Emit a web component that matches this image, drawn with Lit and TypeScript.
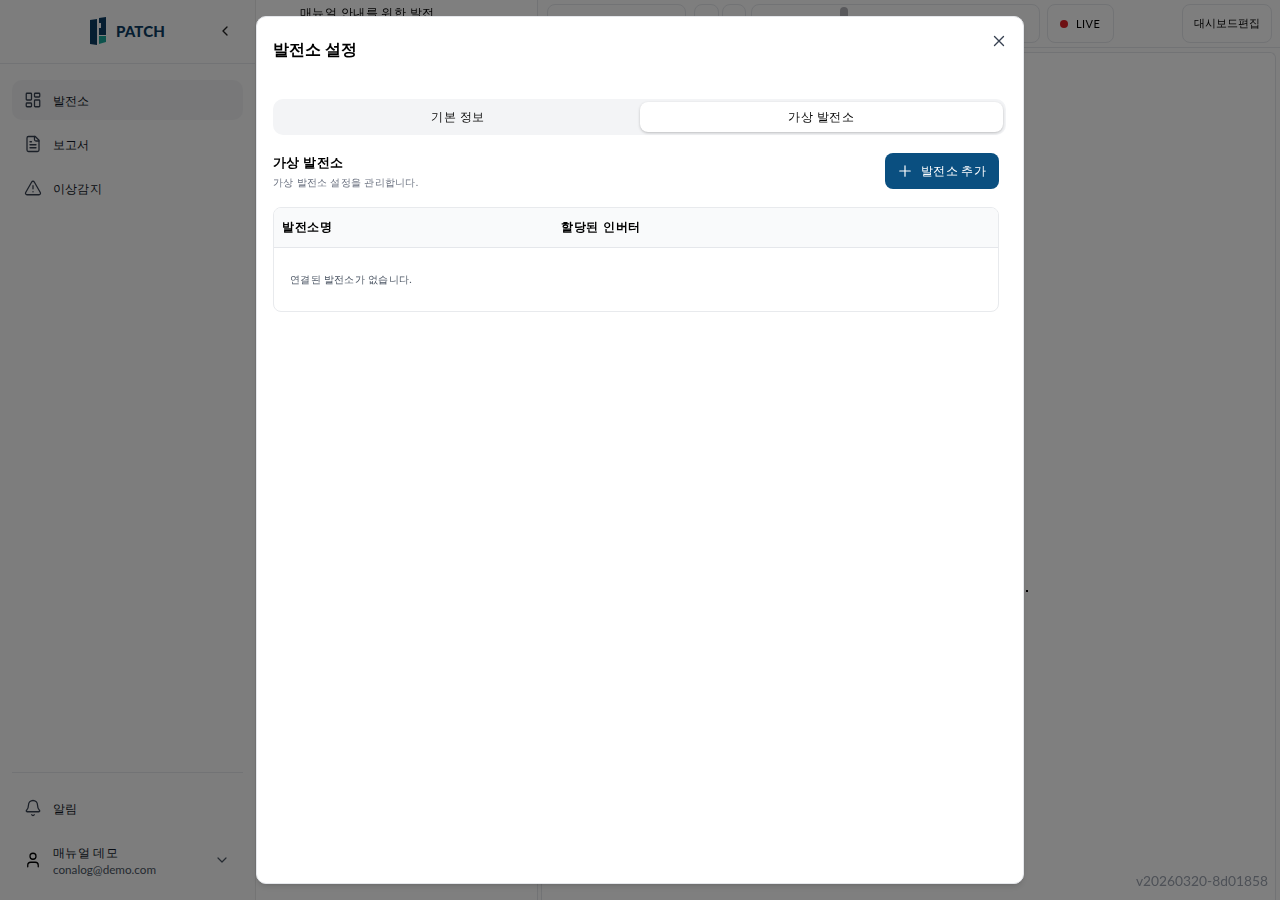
import { LitElement, html, css, svg } from "lit";
import { customElement } from "lit/decorators.js";

const ic = (body: unknown, size = 18, sw = 1.7) => html`<svg width=${size} height=${size} viewBox="0 0 24 24" fill="none" stroke="currentColor" stroke-width=${sw} stroke-linecap="round" stroke-linejoin="round">${body}</svg>`;

@customElement("app-root")
export class AppRoot extends LitElement {
  static styles = css`
    :host { display: block; width: 1280px; height: 900px; overflow: hidden; position: relative; background: #fff; font-family: Lato, sans-serif; color: #000; }
    * { box-sizing: border-box; }
    .app { display: flex; height: 900px; opacity: .999; }
    .side { width: 256px; flex: none; background: #fafafa; border-right: 1px solid #e8e8e8; display: flex; flex-direction: column; }
    .logo-row { height: 64px; flex: none; border-bottom: 1px solid #e5e7eb; display: flex; align-items: center; justify-content: center; position: relative; gap: 10px; }
    .logo-text { font: 900 15px/1 "Lato", sans-serif; letter-spacing: .1px; color: #0c3c62; }
    .collapse { position: absolute; left: 217px; top: 23px; color: #222; display: flex; }
    .nav { flex: 1; padding: 16px 12px; display: flex; flex-direction: column; gap: 4px; }
    .item { height: 40px; border-radius: 10px; display: flex; align-items: center; gap: 11px; padding: 0 12px; font-size: 12.4px; letter-spacing: .2px; font-weight: 500; color: #111827; }
    .item span { padding-top: 2px; }
    .item.on { background: #f0f1f3; }
    .item svg { flex: none; color: #374151; }
    .foot { margin: 0 12px; border-top: 1px solid #e5e7eb; padding: 15px 0 11px; display: flex; flex-direction: column; gap: 4px; height: 128px; }
    .user { display: flex; align-items: center; gap: 11px; padding: 0 12px; height: 56px; }
    .user-info { flex: 1; display: flex; flex-direction: column; }
    .uname { font-size: 12.4px; letter-spacing: .3px; line-height: 19px; font-weight: 500; color: #111827; }
    .email { font-size: 11.7px; line-height: 15px; color: #4b5563; }
    .chev { color: #4b5563; display: flex; margin-right: 1px; }
    .main { flex: 1; display: flex; min-width: 0; }
    .left { width: 282px; flex: none; border-right: 1px solid #e5e7eb; padding: 3px 0 0 44px; font-size: 12.4px; letter-spacing: .4px; font-weight: 500; line-height: 20px; white-space: nowrap; }
    .right { flex: 1; display: flex; flex-direction: column; min-width: 0; background: #fcfcfc; }
    .tools { height: 48px; flex: none; border-bottom: 1px solid #e5e7eb; display: flex; gap: 8px; padding: 4px 0 0 9px; align-items: flex-start; }
    .box { height: 39px; border: 1px solid #e5e7eb; border-radius: 8px; flex: none; }
    .b1 { width: 139px; } .b2 { width: 25px; } .b3 { width: 24px; margin-left: -5px; }
    .b4 { width: 289px; position: relative; margin-left: -3px; }
    .thumb { position: absolute; left: 88px; top: 2px; width: 8px; height: 16px; border-radius: 4px; background: #b3b3b8; }
    .live { width: 67px; margin-left: -1px; display: flex; align-items: center; padding-left: 12px; gap: 8px; font-size: 11px; letter-spacing: .4px; }
    .dot { width: 8px; height: 8px; border-radius: 50%; background: #dc2026; }
    .edit { width: 90px; margin-left: 60px; display: flex; align-items: center; justify-content: center; font-size: 10.8px; }
    .canvas { flex: 1; margin: 4px 4px 0 3px; border: 1px solid #e5e7eb; border-bottom: 0; border-radius: 6px 6px 0 0; position: relative; background: #fff; }
    .speck { position: absolute; left: 484px; top: 537px; width: 2px; height: 2px; background: #000; }
    .ver { position: absolute; right: 12px; bottom: 11px; font: 13.8px/16px Lato, sans-serif; color: #9ca3af; white-space: nowrap; }
    .overlay { position: fixed; inset: 0; background: rgba(0,0,0,.5); display: flex; align-items: center; justify-content: center; }
    .modal { width: 768px; height: 868px; background: #fff; border-radius: 10px; border: 1px solid #e5e7eb; box-shadow: 0 4px 6px -1px rgba(0,0,0,.1), 0 2px 4px -2px rgba(0,0,0,.1); padding: 16px; position: relative; }
    .close { position: absolute; right: 15px; top: 15px; color: #374151; display: flex; }
    h2 { margin: 0; font-size: 15.7px; line-height: 32px; font-weight: 600; color: #000; }
    .tabs { margin-top: 34px; width: 733px; height: 36px; background: #f3f4f6; border-radius: 10px; display: grid; grid-template-columns: 1fr 1fr; padding: 3px; }
    .tab { display: flex; align-items: center; justify-content: center; font-size: 12.4px; letter-spacing: .4px; font-weight: 500; border-radius: 8px; color: #0a0a0a; }
    .tab.on { background: #fff; box-shadow: 0 1px 3px rgba(0,0,0,.2), 0 1px 2px -1px rgba(0,0,0,.1); }
    .panel { width: 726px; }
    .head { display: flex; justify-content: space-between; align-items: flex-start; margin-top: 17px; }
    .htitle { font-size: 13.2px; letter-spacing: .4px; line-height: 20px; font-weight: 600; }
    .hsub { font-size: 10.4px; letter-spacing: .3px; line-height: 14px; margin-top: 3px; color: #6b7280; }
    .add { width: 114px; height: 36px; margin-top: 1px; background: #0a4f80; color: #fff; border-radius: 8px; display: flex; align-items: center; gap: 7px; padding-left: 11px; font-size: 12.4px; letter-spacing: .3px; font-weight: 500; }
    .table { margin-top: 18px; height: 105px; border: 1px solid #e8eaed; border-radius: 8px; overflow: hidden; }
    .thead { height: 40px; background: #f9fafb; border-bottom: 1px solid #e5e7eb; display: grid; grid-template-columns: 279px 1fr; align-items: center; font-size: 12.4px; letter-spacing: .7px; font-weight: 600; padding-bottom: 1px; }
    .thead span { padding-left: 8px; }
    .empty { padding: 23px 16px; font-size: 10.4px; letter-spacing: .3px; line-height: 16px; color: #4b5563; }
  `;

  render() {
    return html`
      <div class="app">
        <aside class="side">
          <div class="logo-row">
            <svg width="16" height="29" viewBox="0 0 16 29"><path d="M0 3 7 2V28L0 27Z" fill="#0c3c62"/><path d="M9 1 16 0V18H9V11h2V6H9Z" fill="#0c3c62"/><path d="M9 19h7v6l-7 2Z" fill="#1aa79a"/></svg>
            <span class="logo-text">PATCH</span>
            <span class="collapse">${ic(svg`<path d="m15 6-6 6 6 6"/>`, 16, 2)}</span>
          </div>
          <nav class="nav">
            <div class="item on">${ic(svg`<rect x="3" y="3" width="7" height="9" rx="1"/><rect x="14" y="3" width="7" height="5" rx="1"/><rect x="14" y="12" width="7" height="9" rx="1"/><rect x="3" y="16" width="7" height="5" rx="1"/>`)}<span>발전소</span></div>
            <div class="item">${ic(svg`<path d="M15 2H6a2 2 0 0 0-2 2v16a2 2 0 0 0 2 2h12a2 2 0 0 0 2-2V7Z"/><path d="M14 2v4a2 2 0 0 0 2 2h4"/><path d="M10 9H8M16 13H8M16 17H8"/>`)}<span>보고서</span></div>
            <div class="item">${ic(svg`<path d="m21.73 18-8-14a2 2 0 0 0-3.48 0l-8 14A2 2 0 0 0 4 21h16a2 2 0 0 0 1.73-3"/><path d="M12 9v4M12 17h.01"/>`)}<span>이상감지</span></div>
          </nav>
          <div class="foot">
            <div class="item">${ic(svg`<path d="M10.27 21a2 2 0 0 0 3.46 0"/><path d="M3.26 15.33A1 1 0 0 0 4 17h16a1 1 0 0 0 .74-1.67C19.41 13.96 18 12.5 18 8A6 6 0 0 0 6 8c0 4.5-1.41 5.96-2.74 7.33"/>`)}<span>알림</span></div>
            <div class="user">
              ${ic(svg`<circle cx="12" cy="7" r="4"/><path d="M19 21v-2a4 4 0 0 0-4-4H9a4 4 0 0 0-4 4v2"/>`)}
              <div class="user-info"><span class="uname">매뉴얼 데모</span><span class="email">conalog@demo.com</span></div>
              <span class="chev">${ic(svg`<path d="m6 9 6 6 6-6"/>`, 16, 1.8)}</span>
            </div>
          </div>
        </aside>
        <main class="main">
          <div class="left">매뉴얼 안내를 위한 발전</div>
          <div class="right">
            <div class="tools">
              <div class="box b1"></div><div class="box b2"></div><div class="box b3"></div>
              <div class="box b4"><div class="thumb"></div></div>
              <div class="box live"><span class="dot"></span>LIVE</div>
              <div class="box edit">대시보드편집</div>
            </div>
            <div class="canvas"><span class="speck"></span></div>
          </div>
        </main>
      </div>
      <div class="ver">v20260320-8d01858</div>
      <div class="overlay">
        <div class="modal">
          <span class="close">${ic(svg`<path d="M18 6 6 18M6 6l12 12"/>`, 18, 1.8)}</span>
          <h2>발전소 설정</h2>
          <div class="tabs"><div class="tab">기본 정보</div><div class="tab on">가상 발전소</div></div>
          <div class="panel">
            <div class="head">
              <div><div class="htitle">가상 발전소</div><div class="hsub">가상 발전소 설정을 관리합니다.</div></div>
              <div class="add">${ic(svg`<path d="M5 12h14M12 5v14"/>`, 18, 1.6)}<span>발전소 추가</span></div>
            </div>
            <div class="table">
              <div class="thead"><span>발전소명</span><span>할당된 인버터</span></div>
              <div class="empty">연결된 발전소가 없습니다.</div>
            </div>
          </div>
        </div>
      </div>
    `;
  }
}
